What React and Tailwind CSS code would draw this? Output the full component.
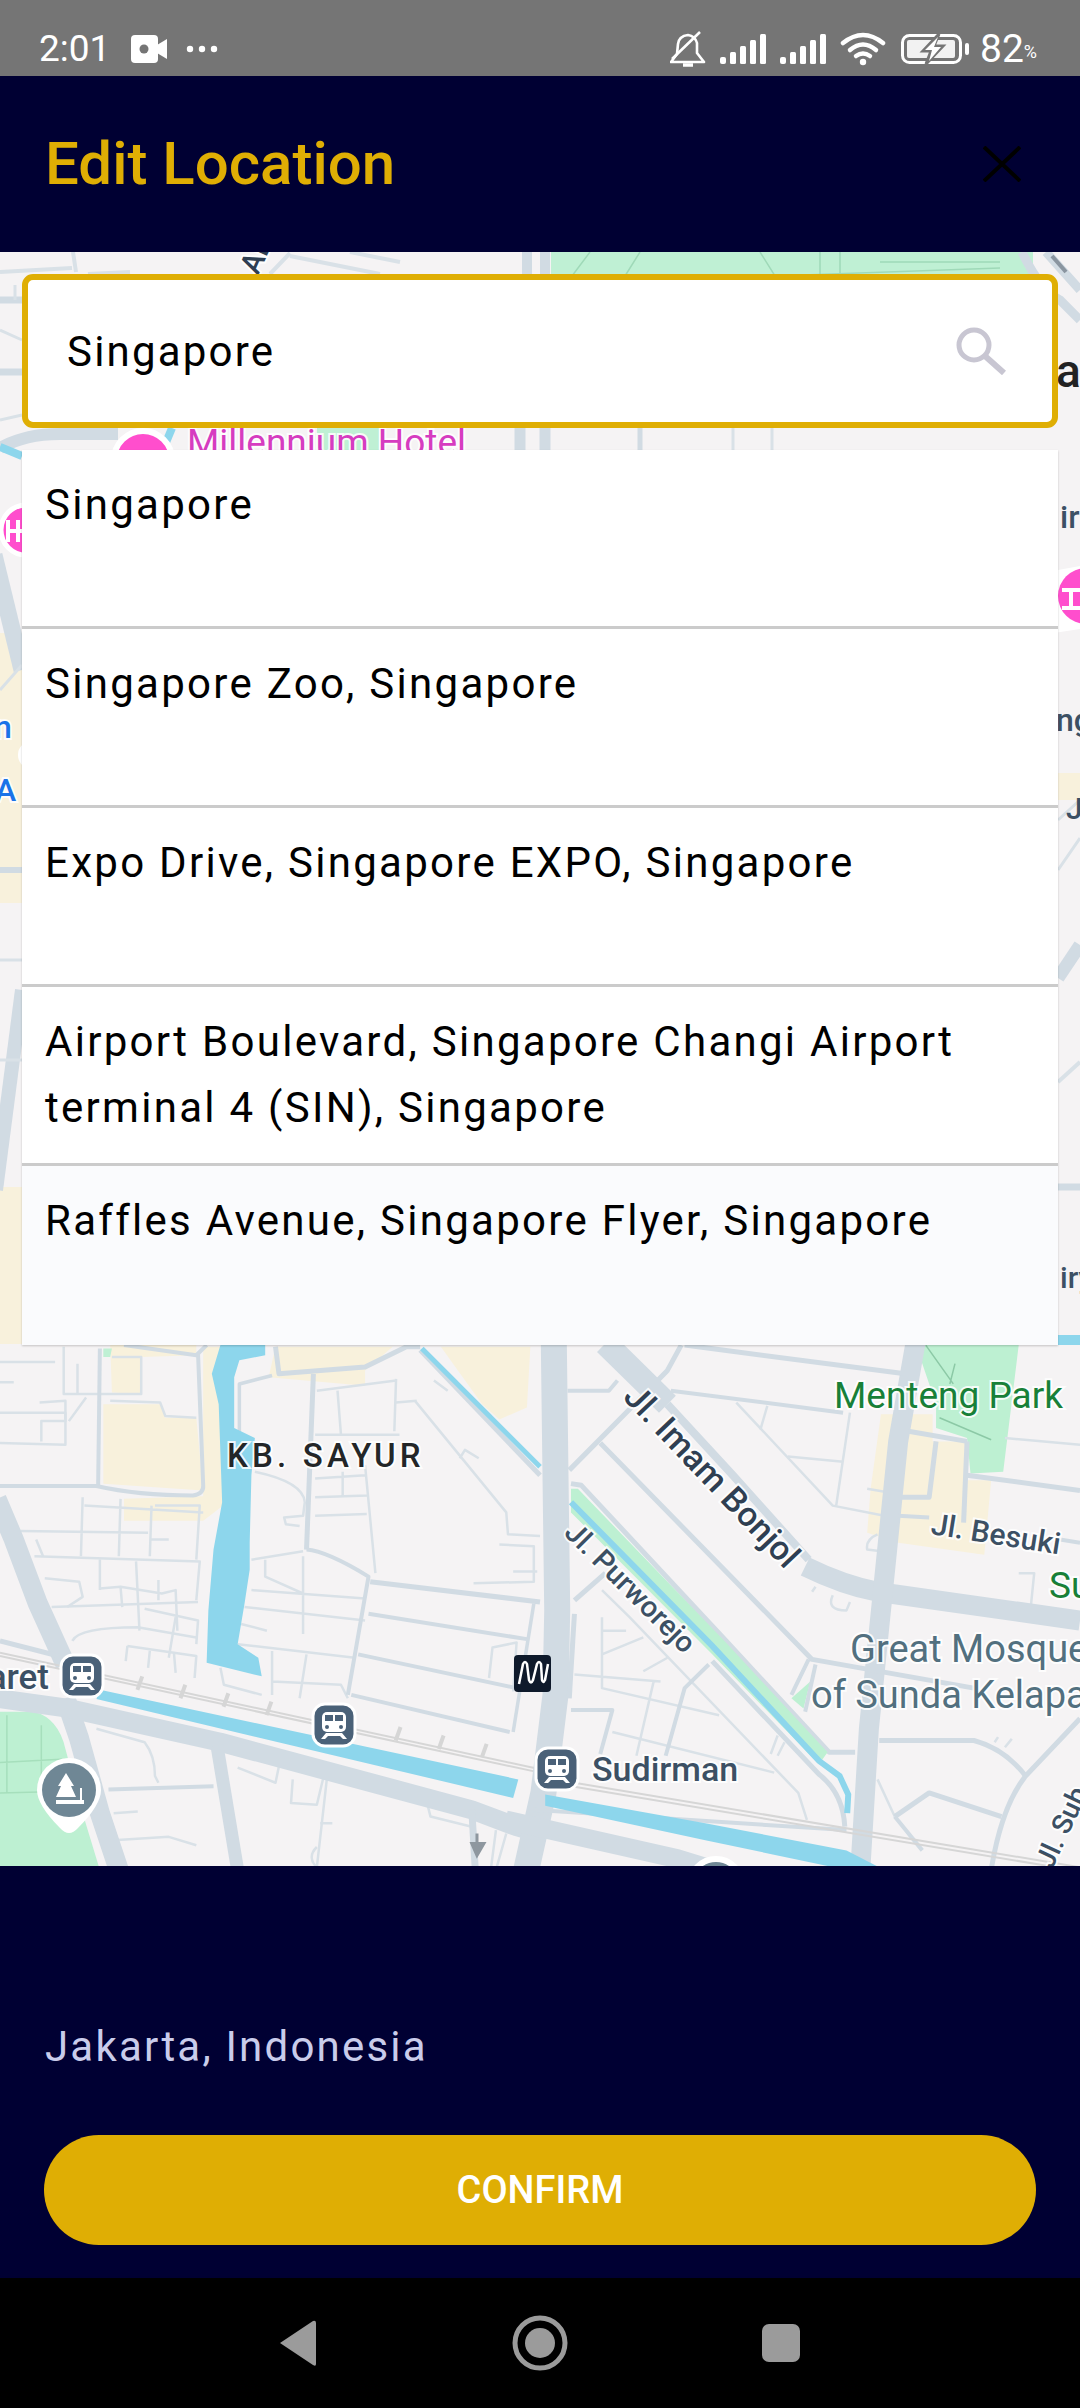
import React from "react";

const FONT = "font-['Roboto',sans-serif]";
const HALO = "[paint-order:stroke] stroke-white stroke-[4px] [stroke-opacity:0.85]";

const LEFT_ROADS = [
  [20, "M-10,470 L40,590 L110,780 L190,960"],
  [20, "M190,1060 L230,1180 L290,1400 L345,1568"],
  [19, "M-10,1060 L200,1090 L640,1190 L1370,1390 L1500,1440 L1568,1460"],
  [13, "M630,1200 L690,1568"],
  [7, "M1370,1390 L1380,1568"],
  [5, "M0,890 L190,940"],
  [4, "M290,25 L285,430"],
  [4, "M0,432 L280,432 Q400,460 560,460 Q592,455 590,430 L575,40"],
  [4, "M360,15 L570,45 L600,15"],
  [5, "M800,20 L810,100 L1060,80 L1180,20 L1220,20"],
  [5, "M1220,30 L1568,400"],
  [5, "M910,100 L890,620"],
  [4, "M890,620 Q950,625 1070,700 L1010,1050"],
  [5, "M1075,715 L1568,775"],
  [4, "M1070,810 L1530,885"],
  [4, "M1040,930 L1500,1030"],
  [4, "M1020,1050 L1480,1160"],
  [3.5, "M1550,780 L1490,1160"],
  [3.5, "M695,280 L695,130 L790,105"],
  [4, "M315,1330 L620,1320"],
];
const LEFT_THIN = [
  "M0,65 L160,65", "M185,20 L185,160 L410,160 L410,50 L325,50", "M0,215 L190,215 L190,310 L0,305", "M115,185 L190,180 L190,240 L120,240 L120,300",
  "M0,125 L40,125", "M225,70 L225,160 M250,170 L200,240", "M320,180 L465,185 L480,225 L570,230",
  "M240,465 L235,640 M350,470 L345,640 M60,565 L430,570 M245,490 L590,510 M440,490 L435,640 M450,490 L580,490 L570,650 M440,590 L490,590",
  "M100,640 L580,655 L570,770 M290,650 L290,740 M395,655 L405,860", "M130,705 L230,715 L240,760 L195,790 M290,735 L350,730 L355,790 M350,730 L470,750 L510,740 L515,860 M460,710 L460,770",
  "M150,790 L575,775 M420,795 L575,830 L570,900 M510,820 L490,940", "M210,890 Q230,850 400,850 L570,880 M370,905 L365,950 M370,905 L570,935 L565,1000 M435,920 L430,970 M505,925 L510,985",
  "M105,590 L125,640", "M640,970 L650,1020 L760,1050", "M730,650 L880,625 M730,740 L1060,765 M770,650 L770,700 L880,750 M710,790 L1060,830 M880,640 L880,870 M700,840 L775,860",
  "M690,900 L1030,940 M790,920 L790,1050 M890,930 L870,1060 M790,1010 L990,1020 L1010,1060", "M1060,370 L1090,690 M915,410 L1060,400 M915,465 L1065,460 M915,520 L1065,515 M915,280 L1160,280 M980,150 L990,280 M995,390 L995,460",
  "M1150,115 L1145,270 M920,150 L1150,120 M1150,185 L1210,180", "M1205,180 L1470,510 L1475,575 L1568,580 M1260,120 L1300,150 M1335,350 L1350,325 L1390,350", "M1450,605 L1550,610 L1550,715 L1375,720 M1490,685 L1560,685",
  "M740,390 Q880,420 885,480 L880,520 L825,525 L830,545 L870,550", "M1420,1000 L1430,910 L1500,895 L1490,1040", "M280,1150 L420,1190 Q450,1230 450,1290 L460,1310",
  "M660,1220 L950,1290 M690,1265 L800,1310 L810,1260 M850,1300 L845,1370 L920,1375 L940,1290 M950,1290 L920,1560", "M330,1400 L400,1395 M330,1480 L490,1470 L570,1495", "M1240,1370 L1250,1410 L1370,1440 M930,1430 L965,1430 M920,1500 Q890,1530 920,1560",
  "M1440,1450 L1425,1568 M1470,1460 L1440,1568",
];
const RIGHT_ROADS = [
  [24, "M190,10 L370,190"],
  [8, "M370,190 L560,400 L780,650"],
  [20, "M770,670 Q880,725 980,745 L1568,830"],
  [20, "M1090,10 L1040,300 L990,800 L955,1150 L930,1568"],
  [26, "M40,0 L50,800 L45,1050 L10,1340 L-40,1568"],
  [19, "M-100,1420 L400,1535 L560,1585"],
  [5, "M420,15 L1060,100"],
  [4, "M380,150 L880,215"],
  [5, "M175,305 L790,945 L1260,1030"],
  [5, "M90,425 L120,430 L540,890 L840,1220 L915,1220"],
  [5, "M500,950 L810,1285 Q880,1340 885,1440"],
  [5, "M85,385 L250,215 L370,90 L410,15"],
  [4, "M80,150 L200,150 L225,120"],
  [5, "M985,1185 L1260,1185 Q1350,1210 1410,1290"],
  [5, "M1568,1120 L1410,1290 Q1340,1380 1310,1568"],
  [5, "M1030,1410 L1130,1340 L1340,1410"],
  [4, "M1030,1410 L1110,1510"],
  [5, "M1240,400 L1568,445"],
  [5, "M1240,300 L1070,270"],
  [5, "M1240,300 L1230,540"],
  [5, "M1150,300 L1130,465 L1050,465"],
  [4, "M1040,520 L1130,525"],
  [4, "M1510,590 L1568,600"],
  [5, "M100,770 L190,690"],
  [4, "M490,960 L420,1030 L365,1230"],
  [4, "M90,1095 L210,1095 L175,1225"],
  [4, "M780,945 L730,1050 M800,960 L770,1100"],
  [5, "M100,810 L85,1060"],
  [4, "M-20,1390 L890,1450"],
];
const RIGHT_THIN = [
  "M1350,290 L1568,310", "M570,185 L850,490 L1000,520", "M660,195 L640,265", "M720,345 L880,360", "M900,215 L860,490",
  "M1390,690 L1435,690 L1425,790", "M950,440 L1005,450 M980,575 Q945,590 950,620 L990,625", "M800,730 L790,745 M850,755 Q830,800 890,800 L900,775",
  "M180,820 L180,1030 L520,1110 M180,860 L250,860 M180,930 L300,880 M300,980 L370,940 M100,990 L350,1010 M330,1010 L280,1230",
  "M180,740 L260,820 L750,1340 L775,1420 M210,1160 L680,1280", "M670,1225 L690,1170 M690,1230 L710,1190", "M1320,1190 L1330,1175 M1350,1205 L1370,1180", "M980,1300 L1030,1410",
];
const RAIL = ["M0,925 L1568,1270", "M0,935 L1568,1280"];

function Train({ x, y }) {
  return (
    <g transform={`translate(${x},${y})`}>
      <rect x="-21" y="-21" width="42" height="42" rx="12" fill="#4A6178" stroke="#ffffff" strokeWidth="3" />
      <rect x="-12" y="-13" width="24" height="20" rx="5" fill="#ffffff" />
      <rect x="-9" y="-10" width="8" height="6" fill="#4A6178" />
      <rect x="1" y="-10" width="8" height="6" fill="#4A6178" />
      <circle cx="-7" cy="2" r="2" fill="#4A6178" />
      <circle cx="7" cy="2" r="2" fill="#4A6178" />
      <path d="M-8,8 L-13,14 L-9,14 L-6,11 L6,11 L9,14 L13,14 L8,8 Z" fill="#ffffff" />
    </g>
  );
}

function MapCanvas() {
  const road = (list, keyp) =>
    list.map(([w, d], i) => (
      <path key={keyp + i} d={d} fill="none" stroke="#D1DBE3" strokeWidth={w} vectorEffect="non-scaling-stroke" strokeLinejoin="round" />
    ));
  const thin = (list, keyp) =>
    list.map((d, i) => (
      <path key={keyp + i} d={d} fill="none" stroke="#D9E1E7" strokeWidth="2.5" vectorEffect="non-scaling-stroke" strokeLinejoin="round" />
    ));
  return (
    <svg className="absolute inset-0 w-full h-full" viewBox="0 252 1080 1614" fontFamily="Roboto, sans-serif">
      <rect x="0" y="252" width="1080" height="1614" fill="#F5F3F4" />

      {/* upper strip */}
      <rect x="551" y="252" width="482" height="24" fill="#BFF0D4" />
      <path d="M590,252 L572,276 M640,252 L625,276 M760,252 L775,276 L1000,268 M820,252 L820,276 M840,252 L840,276 M880,262 L1000,262" stroke="#9FD9B8" strokeWidth="1.5" fill="none" />
      <path d="M527,252 L527,276 M545,252 L545,276" stroke="#D1DBE3" strokeWidth="10" fill="none" />
      <path d="M0,272 L72,268 M73,252 L76,272 M88,274 L130,272 M290,256 L380,274 M350,252 L400,262 M270,274 L290,253" stroke="#D9E1E7" strokeWidth="4" fill="none" />
      <path d="M1022,252 Q1040,290 1060,300 L1080,320 M1046,252 L1080,290" stroke="#D1DBE3" strokeWidth="9" fill="none" />
      <path d="M1052,256 L1066,272" stroke="#8A95A0" strokeWidth="4" />
      <text transform="translate(258,276) rotate(-66)" fontSize="30" fontWeight="500" fill="#2F3F52" className={HALO}>AB</text>

      {/* left strip */}
      <path d="M0,300 L22,300 M0,372 L22,372" stroke="#D1DBE3" strokeWidth="7" />
      <path d="M0,330 L22,340 M15,285 L15,300 M0,420 L22,415" stroke="#D9E1E7" strokeWidth="3" fill="none" />
      <rect x="0" y="633" width="22" height="270" fill="#F8F1DC" />
      <rect x="0" y="1187" width="22" height="157" fill="#F8F1DC" />
      <path d="M-6,555 L22,670" stroke="#D1DBE3" strokeWidth="17" />
      <path d="M0,870 L22,870" stroke="#D1DBE3" strokeWidth="6" />
      <path d="M22,990 L-4,1190" stroke="#D1DBE3" strokeWidth="14" />
      <path d="M0,690 L22,665 M0,960 L22,960 M0,1060 L22,1060" stroke="#D9E1E7" strokeWidth="3" />
      <circle cx="26" cy="530" r="25" fill="#FF4ECD" stroke="#ffffff" strokeWidth="5" />
      <path d="M8,520 L8,542 M8,531 L22,531 M18,520 L18,542" stroke="#ffffff" strokeWidth="4" />
      <text x="-6" y="738" fontSize="32" fontWeight="500" fill="#1A73E8" className={HALO}>n</text>
      <text x="-5" y="801" fontSize="32" fontWeight="500" fill="#1A73E8" className={HALO}>A</text>
      <circle cx="32" cy="755" r="14" fill="#ffffff" />

      {/* strip between search and list */}
      <path d="M0,448 Q25,434 60,434 L118,434" stroke="#D1DBE3" strokeWidth="12" fill="none" />
      <path d="M0,447 L22,456" stroke="#8DD6EC" strokeWidth="8" />
      <rect x="317" y="428" width="62" height="24" fill="#BFF0D4" />
      <path d="M520,428 L520,452 M545,428 L545,452" stroke="#D1DBE3" strokeWidth="11" />
      <path d="M640,428 L640,452" stroke="#D1DBE3" strokeWidth="5" />
      <path d="M733,428 L733,452 L772,452 L772,428" stroke="#D9E1E7" strokeWidth="3" fill="none" />
      <path d="M172,428 L162,452" stroke="#8DD6EC" strokeWidth="8" />
      <circle cx="143" cy="460" r="29" fill="#FF4ECD" stroke="#ffffff" strokeWidth="6" />
      <text x="187" y="455" fontSize="37" fill="#D63CC0" className={HALO}>Millennium Hotel</text>

      {/* right strip */}
      <text x="1056" y="387" fontSize="46" fontWeight="500" fill="#222222">a</text>
      <text x="1060" y="528" fontSize="32" fontWeight="500" fill="#3C5064">ir</text>
      <path d="M1058,820 L1080,800 M1058,870 L1080,838" stroke="#D9E1E7" strokeWidth="3" />
      <rect x="1058" y="773" width="22" height="27" fill="#F8F1DC" />
      <path d="M1058,978 L1080,945" stroke="#D1DBE3" strokeWidth="13" />
      <path d="M1058,1082 L1080,1062" stroke="#D9E1E7" strokeWidth="4" />
      <path d="M1058,1187 L1080,1187" stroke="#D1DBE3" strokeWidth="7" />
      <path d="M1054,633 L1086,628 L1110,590 L1086,565 L1058,570 Z" fill="#ffffff" />
      <circle cx="1086" cy="596" r="28" fill="#FF4ECD" />
      <path d="M1062,590 L1080,590 M1071,590 L1071,608 M1062,608 L1080,608" stroke="#ffffff" strokeWidth="4" />
      <text x="1056" y="731" fontSize="32" fontWeight="500" fill="#3C5064">ng</text>
      <text x="1066" y="819" fontSize="30" fontWeight="500" fill="#3C5064">J</text>
      <text x="1060" y="1288" fontSize="30" fontWeight="500" fill="#3C5064">iry</text>
      <rect x="1058" y="1335" width="22" height="10" fill="#8DD6EC" />

      {/* lower-left quadrant */}
      <g transform="translate(0,1340) scale(0.3444,0.338)">
        <path d="M320,15 L570,15 L570,45 L410,50 L410,160 L325,155 Z M300,190 L465,190 L480,230 L570,230 L590,445 L300,425 Z M590,20 L640,20 L648,490 L590,535 L360,535 L360,470 L590,462 Z M800,20 L1140,20 L1060,90 L1060,135 L780,110 Z M1280,20 L1540,20 L1530,200 L1450,235 L1400,190 Z" fill="#F8F1DC" />
        <path d="M300,25 L325,25 L320,50 L300,50 Z" fill="#BFF0D4" />
        <path d="M0,1100 L100,1100 Q170,1120 190,1210 L240,1400 L290,1568 L0,1568 Z" fill="#BDF0D2" />
        <path d="M0,1250 L190,1240 M120,1140 L120,1320 M20,1110 L20,1340 M0,1340 L200,1335" stroke="#A6DFBC" strokeWidth="1.5" vectorEffect="non-scaling-stroke" fill="none" />
        {thin(LEFT_THIN, "lt")}
        {road(LEFT_ROADS, "lr")}
        <path d="M640,15 L770,15 L770,45 L695,60 L680,110 L680,260 L740,290 L730,400 L725,600 L725,680 L710,780 L690,900 L750,940 L760,995 L600,955 L605,800 L620,620 L645,480 L635,190 L615,100 Z" fill="#8DD6EC" />
        <path d="M1225,25 L1568,375" stroke="#8DD6EC" strokeWidth="5" vectorEffect="non-scaling-stroke" />
        <path d="M290,1035 L1505,1300 L1490,1355 L280,1062 Z" fill="#8DD6EC" />
        {RAIL.map((d, i) => (
          <path key={i} d={d} stroke="#D6D6D6" strokeWidth="2" vectorEffect="non-scaling-stroke" fill="none" />
        ))}
        {[405, 530, 655, 780, 1155, 1280, 1405].map((x) => (
          <path key={x} d={`M${x + 8},${995 + (x - 405) * 0.2} L${x - 6},${1035 + (x - 405) * 0.2}`} stroke="#D6D6D6" strokeWidth="4" vectorEffect="non-scaling-stroke" />
        ))}
        <path d="M1385,1460 L1385,1510 M1370,1490 L1385,1525 L1405,1490 Z" stroke="#8E979F" strokeWidth="3" fill="#8E979F" vectorEffect="non-scaling-stroke" />
      </g>

      {/* lower-right quadrant */}
      <g transform="translate(540,1340) scale(0.3444,0.338)">
        <path d="M990,220 L1140,220 L1140,300 L1240,300 L1240,415 L1310,415 L1290,635 L1040,600 L950,570 L960,440 Z" fill="#F8F1DC" />
        <path d="M1120,15 L1390,15 L1345,390 L1250,395 L1240,290 L1150,260 L1150,190 L1100,40 Z" fill="#BDF0D2" />
        <path d="M1120,15 L1200,130 M1205,70 L1190,130 M1160,230 L1310,295" stroke="#8CC9A6" strokeWidth="1.5" vectorEffect="non-scaling-stroke" fill="none" />
        <path d="M730,1060 L785,1010 L765,1090 Z" fill="#BDF0D2" />
        {thin(RIGHT_THIN, "rt")}
        {road(RIGHT_ROADS, "rr")}
        <path d="M90,440 L110,440 L535,890 L835,1220 L810,1255 L500,930 L90,510 Z" fill="#BDF0D2" />
        <path d="M90,480 L500,905 L810,1245 L870,1290 L895,1345 L892,1400" fill="none" stroke="#8DD6EC" strokeWidth="6" vectorEffect="non-scaling-stroke" />
        <path d="M15,1345 L480,1430 L890,1510 L1000,1568 L890,1568 L480,1480 L15,1378 Z" fill="#8DD6EC" />
        <path d="M100,1310 L1568,1560 M100,1322 L1568,1572" stroke="#D6D6D6" strokeWidth="2" vectorEffect="non-scaling-stroke" fill="none" />
      </g>

      {/* map labels and markers */}
      <text x="227" y="1467" fontSize="33" fontWeight="500" letterSpacing="4.2" fill="#232628" className={HALO}>KB. SAYUR</text>
      <text x="834" y="1408" fontSize="37" fill="#188038" className={HALO}>Menteng Park</text>
      <text x="1049" y="1598" fontSize="37" fill="#188038" className={HALO}>Su</text>
      <text x="850" y="1662" fontSize="38" fill="#52707F" className={HALO}>Great Mosque</text>
      <text x="811" y="1708" fontSize="38" fill="#52707F" className={HALO}>of Sunda Kelapa</text>
      <text x="592" y="1781" fontSize="34" fontWeight="500" fill="#3C5064" className={HALO}>Sudirman</text>
      <text x="49" y="1689" fontSize="35" fontWeight="500" fill="#3C5064" textAnchor="end" className={HALO}>aret</text>
      <text transform="translate(622,1398) rotate(46.5)" fontSize="34" fontWeight="500" fill="#2F3F52" className={HALO}>Jl. Imam Bonjol</text>
      <text transform="translate(563,1534) rotate(45)" fontSize="29" fontWeight="500" fill="#3C5064" className={HALO}>Jl. Purworejo</text>
      <text transform="translate(930,1534) rotate(9)" fontSize="30" fontWeight="500" fill="#3C5064" className={HALO}>Jl. Besuki</text>
      <text transform="translate(1052,1870) rotate(-65)" fontSize="28" fontWeight="500" fill="#3C5064" className={HALO}>Jl. Sub</text>
      <Train x={82} y={1676} />
      <Train x={334} y={1725} />
      <Train x={557} y={1769} />
      <rect x="514" y="1655" width="37" height="37" rx="4" fill="#0F1A2B" />
      <path d="M519,1684 L523,1664 Q525,1660 527,1664 L529,1680 Q531,1685 533,1680 L537,1664 Q539,1660 541,1664 L542,1680 Q543,1684 545,1680 L548,1664" stroke="#ffffff" strokeWidth="2.5" fill="none" />
      <path d="M37,1790 A32,32 0 1 1 101,1790 Q101,1805 78,1828 Q69,1838 60,1828 Q37,1805 37,1790 Z" fill="#ffffff" />
      <circle cx="69" cy="1790" r="27" fill="#6F8795" />
      <path d="M66,1773 L74,1786 L71,1786 L76,1797 L56,1797 L61,1786 L58,1786 Z M56,1800 L84,1800 L84,1804 L56,1804 Z M80,1788 L82,1788 L82,1800 L80,1800 Z" fill="#ffffff" />
      <circle cx="716" cy="1885" r="26" fill="#6F8795" stroke="#ffffff" strokeWidth="6" />
    </svg>
  );
}

function Signal({ className }) {
  return (
    <svg className={className} width="46" height="30" viewBox="0 0 46 30" fill="#ffffff">
      <rect x="0" y="23" width="6" height="7" rx="2" />
      <rect x="10" y="18" width="6" height="12" rx="1.5" />
      <rect x="20" y="12" width="6" height="18" rx="1.5" />
      <rect x="30" y="6" width="6" height="24" rx="1.5" />
      <rect x="40" y="0" width="6" height="30" rx="1.5" />
    </svg>
  );
}

function StatusBar() {
  return (
    <div className={`h-[76px] bg-[#757575] shrink-0 flex items-center justify-between pl-[39px] pr-[43px] pt-[22px] text-white ${FONT}`}>
      <div className="flex items-center">
        <span className="text-[37px] leading-[44px]">2:01</span>
        <svg className="ml-[21px]" width="37" height="28" viewBox="0 0 37 28">
          <rect x="0" y="0" width="27" height="28" rx="4" fill="#ffffff" />
          <path d="M26,10 L36,4 L36,24 L26,18 Z" fill="#ffffff" />
          <circle cx="13" cy="14" r="4.5" fill="#757575" />
        </svg>
        <svg className="ml-[18px]" width="32" height="10" viewBox="0 0 32 10">
          <circle cx="4" cy="5" r="3.2" fill="#ffffff" />
          <circle cx="16" cy="5" r="3.2" fill="#ffffff" />
          <circle cx="28" cy="5" r="3.2" fill="#ffffff" />
        </svg>
      </div>
      <div className="flex items-center">
        <svg width="36" height="36" viewBox="0 0 36 36" fill="none" stroke="#ffffff" strokeWidth="2.6">
          <path d="M1,31 L7,23 L8,13 Q9,5 18,4 Q25,5 27,12 L27,22 L34,31 Z" strokeLinejoin="round" />
          <path d="M2,28 L30,1" />
          <path d="M13,34 L23,34" strokeWidth="3.5" />
        </svg>
        <Signal className="ml-[14px]" />
        <Signal className="ml-[14px]" />
        <svg className="ml-[14px]" width="46" height="34" viewBox="0 0 46 34" fill="none" stroke="#ffffff" strokeWidth="4.5" strokeLinecap="round">
          <path d="M3,11 Q23,-5 43,11" />
          <path d="M10,18 Q23,7 36,18" />
          <path d="M16,24 Q23,19 30,24" />
          <circle cx="23" cy="30" r="3.2" fill="#ffffff" stroke="none" />
        </svg>
        <svg className="ml-[15px]" width="69" height="30" viewBox="0 0 69 30">
          <rect x="1.5" y="1.5" width="58" height="27" rx="7" fill="none" stroke="#ffffff" strokeWidth="3" />
          <rect x="6" y="6" width="48" height="18" rx="2" fill="#F2F2F2" />
          <rect x="64" y="9" width="4" height="12" rx="2" fill="#ffffff" />
          <path d="M38,0 L22,17 L30,17 L25,30 L42,12 L33,12 Z" fill="#757575" stroke="#757575" strokeWidth="3" />
          <path d="M37,3 L24,16 L31,16 L28,27 L40,13 L33,13 Z" fill="#ffffff" />
        </svg>
        <span className="ml-[10px] text-[39px] leading-[44px]">82</span>
        <span className="text-[18px] leading-[44px] mt-[6px]">%</span>
      </div>
    </div>
  );
}

const ROWS = [
  ["Singapore"],
  ["Singapore Zoo, Singapore"],
  ["Expo Drive, Singapore EXPO, Singapore"],
  ["Airport Boulevard, Singapore Changi Airport", "terminal 4 (SIN), Singapore"],
  ["Raffles Avenue, Singapore Flyer, Singapore"],
];

export default function App() {
  return (
    <div className={`w-[1080px] h-[2408px] flex flex-col bg-[#000033] ${FONT}`}>
      <StatusBar />
      <header className="h-[176px] shrink-0 flex items-center justify-between pl-[45px] pr-[59px] bg-[#000033]">
        <h1 className="text-[60px] font-medium text-[#DFAE04] leading-none">Edit Location</h1>
        <svg width="38" height="36" viewBox="0 0 38 36" stroke="#000000" strokeWidth="4" fill="none">
          <path d="M1,1 L37,35 M37,1 L1,35" />
        </svg>
      </header>

      <section className="relative h-[1614px] shrink-0 overflow-hidden">
        <MapCanvas />
        <div className="relative pt-[22px] px-[22px]">
          <div className="h-[154px] bg-white border-[6px] border-[#DFAE04] rounded-[11px] flex items-center justify-between pl-[39px] pr-[46px]">
            <span className="text-[42px] tracking-[2.2px] text-black">Singapore</span>
            <svg width="50" height="48" viewBox="0 0 50 48" fill="none" stroke="#C8C6D2" strokeWidth="5">
              <circle cx="18" cy="18" r="15" />
              <path d="M29,29 L48,46" strokeWidth="6" />
            </svg>
          </div>
          <ul className="mt-[22px] shadow-[0_1px_2px_rgba(0,0,0,0.2)]">
            {ROWS.map((lines, i) => (
              <li
                key={i}
                className={`h-[179px] pt-[22px] pl-[23px] text-[42px] leading-[66px] tracking-[2.28px] text-black ${
                  i === 4 ? "bg-[#FAFBFD]" : "bg-white border-b-[3px] border-[#CBCBCB]"
                }`}
              >
                {lines.map((l) => (
                  <div key={l} className="whitespace-nowrap">{l}</div>
                ))}
              </li>
            ))}
          </ul>
        </div>
      </section>

      <footer className="h-[412px] shrink-0 flex flex-col justify-end px-[44px] pb-[33px] bg-[#000033]">
        <p className="text-[42px] leading-[50px] tracking-[2.2px] text-[#C9CCEB] ml-[1px] mb-[63px]">Jakarta, Indonesia</p>
        <button className="h-[110px] w-full rounded-full bg-[#DFAE04] text-white text-[38px] font-medium">CONFIRM</button>
      </footer>

      <nav className="h-[130px] shrink-0 bg-black flex items-center justify-center">
        <svg width="520" height="60" viewBox="279 2313 520 60">
          <path d="M279,2343 L312,2321 Q315,2320 315,2323 L315,2364 Q315,2367 312,2365 Z" fill="#9B9B9B" />
          <circle cx="539" cy="2343" r="25" fill="none" stroke="#9B9B9B" strokeWidth="5" />
          <circle cx="539" cy="2343" r="15" fill="#9B9B9B" />
          <rect x="761" y="2324" width="38" height="38" rx="7" fill="#9B9B9B" />
        </svg>
      </nav>
    </div>
  );
}
